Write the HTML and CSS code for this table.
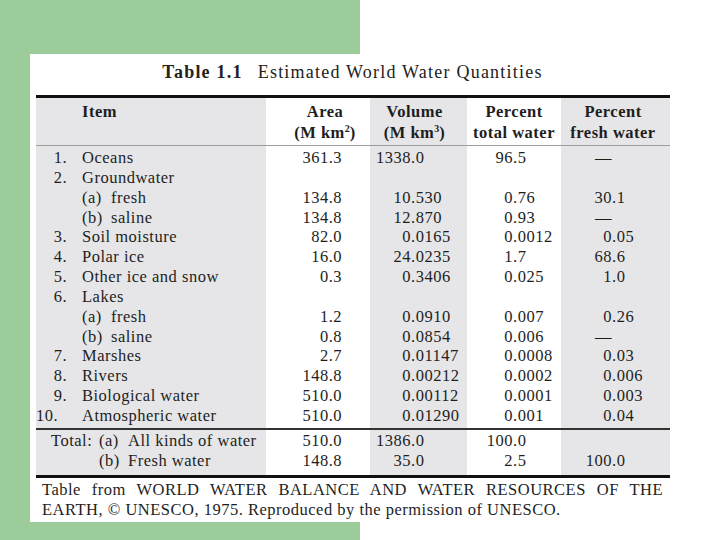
FILE: index.html
```html
<!DOCTYPE html>
<html lang="en">
<head>
<meta charset="utf-8">
<title>Estimated World Water Quantities</title>
<link rel="stylesheet" href="styles.css">
</head>
<body>
<div class="stage">
  <div class="green"></div>
  <div class="card">
    <div class="title"><b>Table 1.1</b><span class="gap"></span>Estimated World Water Quantities</div>
    <table class="water">
      <colgroup>
        <col class="c-item shade">
        <col class="c-area">
        <col class="c-vol shade">
        <col class="c-tot">
        <col class="c-fresh shade">
      </colgroup>
      <thead>
        <tr>
          <th class="h-item">Item</th>
          <th class="h-area">Area<br>(M km<sup>2</sup>)</th>
          <th class="h-vol">Volume<br>(M km<sup>3</sup>)</th>
          <th class="h-tot">Percent<br>total water</th>
          <th class="h-fresh">Percent<br>fresh water</th>
        </tr>
      </thead>
      <tbody class="rows">
        <tr class="first"><td><span class="no">1.</span>Oceans</td><td class="area">361.3</td><td class="vol"><span class="i">1338</span>.0</td><td class="tot"><span class="i">96</span>.5</td><td class="fr"><span class="i">—</span></td></tr>
        <tr><td><span class="no">2.</span>Groundwater</td><td></td><td></td><td></td><td></td></tr>
        <tr><td><span class="no"></span><span class="sub">(a)</span>fresh</td><td class="area">134.8</td><td class="vol"><span class="i">10</span>.530</td><td class="tot"><span class="i">0</span>.76</td><td class="fr"><span class="i">30</span>.1</td></tr>
        <tr><td><span class="no"></span><span class="sub">(b)</span>saline</td><td class="area">134.8</td><td class="vol"><span class="i">12</span>.870</td><td class="tot"><span class="i">0</span>.93</td><td class="fr"><span class="i">—</span></td></tr>
        <tr><td><span class="no">3.</span>Soil moisture</td><td class="area">82.0</td><td class="vol"><span class="i">0</span>.0165</td><td class="tot"><span class="i">0</span>.0012</td><td class="fr"><span class="i">0</span>.05</td></tr>
        <tr><td><span class="no">4.</span>Polar ice</td><td class="area">16.0</td><td class="vol"><span class="i">24</span>.0235</td><td class="tot"><span class="i">1</span>.7</td><td class="fr"><span class="i">68</span>.6</td></tr>
        <tr><td><span class="no">5.</span>Other ice and snow</td><td class="area">0.3</td><td class="vol"><span class="i">0</span>.3406</td><td class="tot"><span class="i">0</span>.025</td><td class="fr"><span class="i">1</span>.0</td></tr>
        <tr><td><span class="no">6.</span>Lakes</td><td></td><td></td><td></td><td></td></tr>
        <tr><td><span class="no"></span><span class="sub">(a)</span>fresh</td><td class="area">1.2</td><td class="vol"><span class="i">0</span>.0910</td><td class="tot"><span class="i">0</span>.007</td><td class="fr"><span class="i">0</span>.26</td></tr>
        <tr><td><span class="no"></span><span class="sub">(b)</span>saline</td><td class="area">0.8</td><td class="vol"><span class="i">0</span>.0854</td><td class="tot"><span class="i">0</span>.006</td><td class="fr"><span class="i">—</span></td></tr>
        <tr><td><span class="no">7.</span>Marshes</td><td class="area">2.7</td><td class="vol"><span class="i">0</span>.01147</td><td class="tot"><span class="i">0</span>.0008</td><td class="fr"><span class="i">0</span>.03</td></tr>
        <tr><td><span class="no">8.</span>Rivers</td><td class="area">148.8</td><td class="vol"><span class="i">0</span>.00212</td><td class="tot"><span class="i">0</span>.0002</td><td class="fr"><span class="i">0</span>.006</td></tr>
        <tr><td><span class="no">9.</span>Biological water</td><td class="area">510.0</td><td class="vol"><span class="i">0</span>.00112</td><td class="tot"><span class="i">0</span>.0001</td><td class="fr"><span class="i">0</span>.003</td></tr>
        <tr class="last"><td><span class="no wide">10.</span>Atmospheric water</td><td class="area">510.0</td><td class="vol"><span class="i">0</span>.01290</td><td class="tot"><span class="i">0</span>.001</td><td class="fr"><span class="i">0</span>.04</td></tr>
      </tbody>
      <tbody class="totals">
        <tr class="first"><td><span class="tl">Total:</span><span class="sub">(a)</span>All kinds of water</td><td class="area">510.0</td><td class="vol"><span class="i">1386</span>.0</td><td class="tot"><span class="i">100</span>.0</td><td class="fr"></td></tr>
        <tr class="last"><td><span class="tl"></span><span class="sub">(b)</span>Fresh water</td><td class="area">148.8</td><td class="vol"><span class="i">35</span>.0</td><td class="tot"><span class="i">2</span>.5</td><td class="fr"><span class="i">100</span>.0</td></tr>
      </tbody>
    </table>
    <div class="caption">
      <div class="cap-line1">Table from WORLD WATER BALANCE AND WATER RESOURCES OF THE</div>
      <div class="cap-line2">EARTH, © UNESCO, 1975. Reproduced by the permission of UNESCO.</div>
    </div>
  </div>
</div>
</body>
</html>
```

FILE: styles.css
```css
html, body {
  margin: 0;
  padding: 0;
  background: #ffffff;
}

.stage {
  width: 720px;
  height: 540px;
  display: grid;
  grid-template-columns: 720px;
  grid-template-rows: 540px;
  overflow: hidden;
  font-family: "Liberation Serif", "Times New Roman", serif;
  color: #1e1e1e;
}

.green {
  grid-area: 1 / 1;
  width: 360px;
  height: 540px;
  background: #9ccc99;
}

.card {
  grid-area: 1 / 1;
  margin: 54px 0 0 30px;
  width: 645px;
  height: 468px;
  background: #ffffff;
  display: flex;
  flex-direction: column;
}

.title {
  margin-top: 6px;
  height: 24px;
  line-height: 24px;
  font-size: 18px;
  letter-spacing: 1.22px;
  text-align: center;
  color: #222;
}

.title b {
  font-weight: bold;
}

.gap {
  display: inline-block;
  width: 15px;
}

.water {
  margin: 11px 0 0 6px;
  width: 634px;
  table-layout: fixed;
  border-collapse: collapse;
  border-top: 3px solid #111;
  border-bottom: 3px solid #111;
  font-size: 16.5px;
  letter-spacing: 0.5px;
}

.c-item { width: 230px; }
.c-area { width: 104px; }
.c-vol { width: 97px; }
.c-tot { width: 94px; }
.c-fresh { width: 109px; }

.shade {
  background: #e6e6e8;
}

.water th {
  font-weight: bold;
  line-height: 21px;
  padding: 2.5px 0;
  vertical-align: top;
  text-align: center;
  white-space: nowrap;
}

.water thead tr {
  border-bottom: 1px solid #9d9d9d;
}

.water sup {
  font-size: 10px;
  line-height: 0;
  letter-spacing: 0;
  vertical-align: 6px;
}

.h-item {
  text-align: left !important;
  padding-left: 46px !important;
}

.h-area { padding-left: 14px !important; }
.h-vol { padding-right: 8px !important; }
.h-fresh { padding-right: 5px !important; }

.water td {
  padding: 0;
  white-space: nowrap;
  text-align: left;
  vertical-align: middle;
}

.rows td {
  line-height: 19.85px;
}

.rows tr.first td { padding-top: 2px; }
.rows tr.last td { padding-bottom: 2px; }

.totals {
  border-top: 2px solid #333;
}

.totals td {
  line-height: 20.5px;
}

.totals tr.first td { padding-top: 1px; }
.totals tr.last td { padding-bottom: 3px; }

.no {
  display: inline-block;
  width: 31px;
  margin-right: 15px;
  text-align: right;
}

.no.wide {
  width: 21px;
  margin-right: 25px;
}

.sub {
  display: inline-block;
  width: 29px;
}

.tl {
  display: inline-block;
  width: 48px;
  margin-left: 15px;
}

.water td.area {
  text-align: right;
  padding-right: 28px;
}

.i {
  display: inline-block;
  text-align: right;
}

.vol .i { width: 41px; }
.tot .i { width: 46px; }
.fr .i { width: 51px; }

.caption {
  margin: 2px 0 0 12px;
  width: 621px;
  font-size: 16.5px;
  line-height: 20px;
  letter-spacing: 0.5px;
  color: #1e1e1e;
}

.cap-line1 {
  text-align: justify;
  text-align-last: justify;
  white-space: nowrap;
}

.cap-line2 {
  text-align: left;
  white-space: nowrap;
}
```
